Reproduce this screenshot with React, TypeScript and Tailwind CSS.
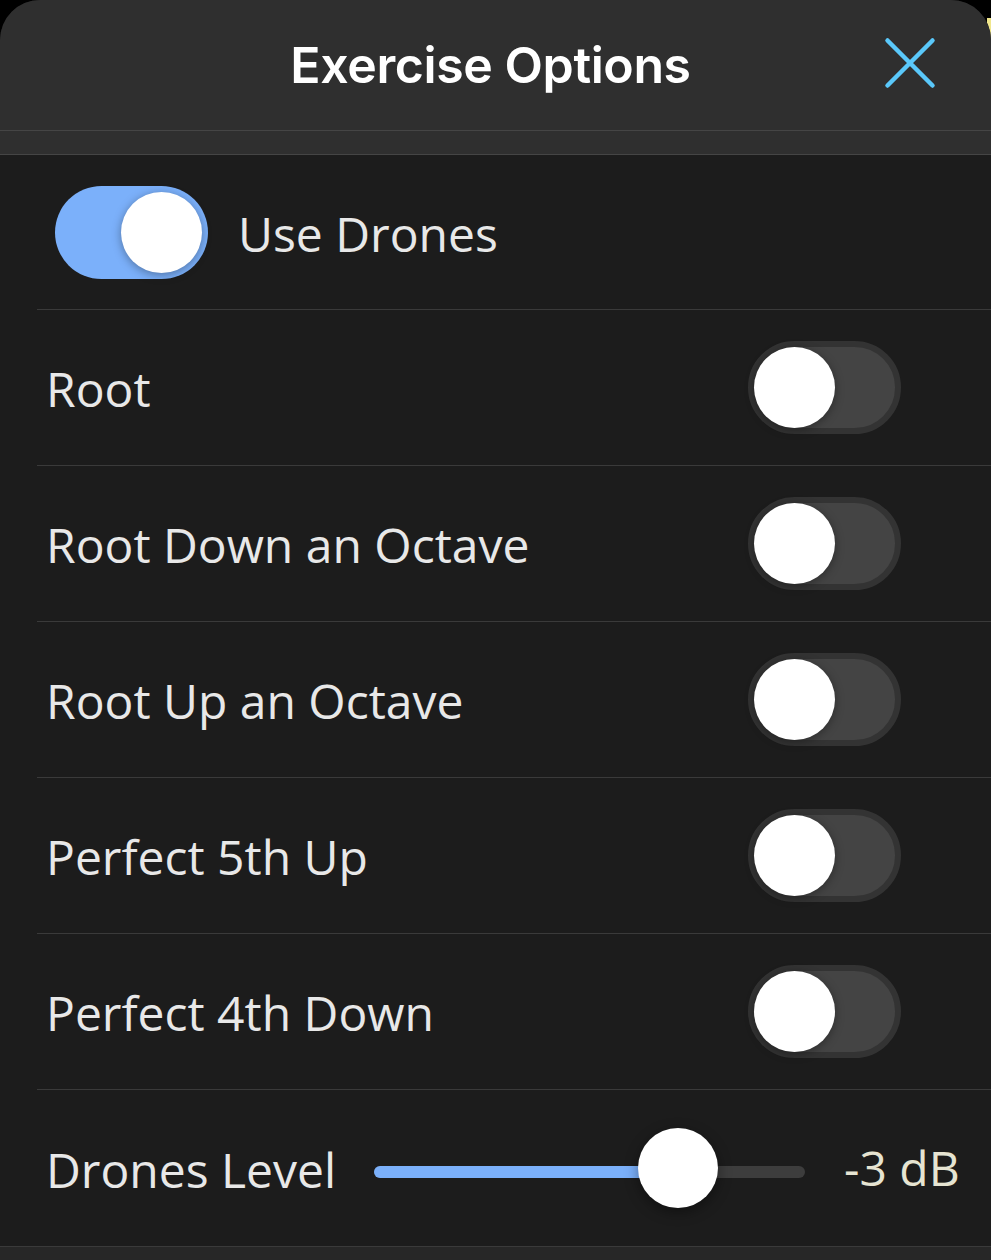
const drones = [
  "Root",
  "Root Down an Octave",
  "Root Up an Octave",
  "Perfect 5th Up",
  "Perfect 4th Down",
];

function Toggle({ on }: { on: boolean }) {
  return (
    <div
      className={
        on
          ? "flex h-[93px] w-[153px] shrink-0 items-center justify-end rounded-full bg-[#7bb0fa] pr-[6px]"
          : "flex h-[93px] w-[153px] shrink-0 items-center justify-start rounded-full border-[6px] border-[#333333] bg-[#444444]"
      }
    >
      <div className="h-[81px] w-[81px] rounded-full bg-white shadow-[0_2px_10px_rgba(0,0,0,0.35)]" />
    </div>
  );
}

export default function App() {
  const font = "font-['Open_Sans','Noto_Sans',sans-serif]";
  return (
    <div className="relative h-[1260px] w-[991px] overflow-hidden bg-black">
      <div className="absolute right-0 top-[18px] h-[22px] w-[4px] bg-[#f0e68c]" />
      <div className="relative flex h-full flex-col overflow-hidden rounded-t-[40px] bg-[#1c1c1c]">
        <header className="relative flex h-[130px] shrink-0 items-center justify-center bg-[#2f2f2f] pr-[10px]">
          <h1 className="font-['Inter',sans-serif] text-[50px] font-semibold tracking-[-0.4px] text-white">
            Exercise Options
          </h1>
          <svg
            className="absolute left-[882px] top-[35px]"
            width="56"
            height="56"
            viewBox="0 0 56 56"
            fill="none"
            stroke="#5ac8fa"
            strokeWidth="4.5"
            strokeLinecap="round"
          >
            <path d="M5.5 5.5L50.5 50.5M50.5 5.5L5.5 50.5" />
          </svg>
        </header>
        <div className="h-[25px] shrink-0 border-y border-[#454545] bg-[#2f2f2f]" />

        <div className={`flex flex-col pl-[37px] ${font}`}>
          <div className="flex h-[155px] items-center gap-[30px] border-b border-[#3a3a3a] pl-[18px]">
            <Toggle on />
            <span className="pt-[3px] text-[48px] text-[#e8e8e8]">Use Drones</span>
          </div>
          {drones.map((d) => (
            <div
              key={d}
              className="flex h-[156px] items-center justify-between border-b border-[#3a3a3a] pl-[9px] pr-[90px]"
            >
              <span className="pt-[3px] text-[48px] text-[#e8e8e8]">{d}</span>
              <Toggle on={false} />
            </div>
          ))}
          <div className="flex h-[156px] items-center pl-[9px]">
            <span className="w-[328px] shrink-0 pt-[3px] text-[48px] text-[#e8e8e8]">Drones Level</span>
            <div className="relative flex h-[80px] w-[431px] shrink-0 items-center">
              <div className="mt-[7px] flex h-[12px] w-full overflow-hidden rounded-full bg-[#3d3d3d]">
                <div className="h-full w-[304px] bg-[#7bb0fa]" />
              </div>
              <div className="absolute left-[264px] top-0 h-[80px] w-[80px] rounded-full bg-white shadow-[0_4px_14px_rgba(0,0,0,0.4)]" />
            </div>
            <span className="ml-[39px] text-[48px] text-[#e6e4d2]">-3 dB</span>
          </div>
        </div>
        <div className="flex-1 border-t border-[#3a3a3a] bg-[#272727]" />
      </div>
    </div>
  );
}
